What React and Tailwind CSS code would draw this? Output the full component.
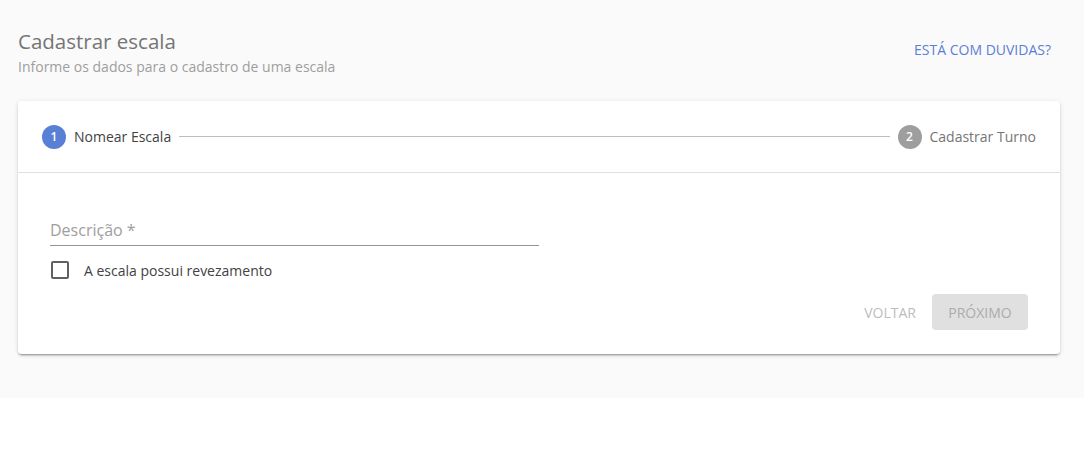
export default function App() {
  return (
    <div className="min-h-[460px] bg-white font-['Open_Sans',sans-serif]">
      <div className="bg-[#fafafa] pb-[44px] pl-[18px] pr-[24px] pt-[27px]">
        <div className="flex items-start justify-between">
          <div>
            <h1 className="text-[20.5px] leading-[28px] text-[#757575]">Cadastrar escala</h1>
            <p className="mt-[2px] text-[14px] leading-[20px] text-[#9e9e9e]">
              Informe os dados para o cadastro de uma escala
            </p>
          </div>
          <a className="mr-[9px] mt-[13px] text-[14px] leading-[20px] text-[#5b7fd6]">ESTÁ COM DUVIDAS?</a>
        </div>

        <div className="mt-[24px] rounded bg-white shadow-[0_2px_2px_rgba(0,0,0,0.14),0_1px_5px_rgba(0,0,0,0.12),0_3px_1px_-2px_rgba(0,0,0,0.2)]">
          <div className="flex h-[72px] items-center border-b border-[#e0e0e0] px-[24px]">
            <span className="flex h-[24px] w-[24px] items-center justify-center rounded-full bg-[#5880d4] text-[12px] font-semibold text-white">1</span>
            <span className="ml-[8px] text-[14px] text-[#424242]">Nomear Escala</span>
            <div className="mx-[8px] h-px flex-1 bg-[#bdbdbd]" />
            <span className="flex h-[24px] w-[24px] items-center justify-center rounded-full bg-[#9e9e9e] text-[12px] font-semibold text-white">2</span>
            <span className="ml-[8px] text-[14px] text-[#757575]">Cadastrar Turno</span>
          </div>

          <div className="px-[32px] pb-[24px]">
            <div className="w-[489px] border-b border-[#949494] pb-[3px] pt-[45px]">
              <span className="text-[16px] leading-[24px] text-[#9e9e9e]">Descrição *</span>
            </div>
            <label className="mt-[15px] flex h-[18px] items-center">
              <span className="ml-px box-border h-[18px] w-[18px] rounded-[2px] border-2 border-[#616161]" />
              <span className="ml-[15px] text-[14px] text-[#424242]">A escala possui revezamento</span>
            </label>
            <div className="mt-[15px] flex items-center justify-end gap-[16px]">
              <span className="text-[14px] text-[#bdbdbd]">VOLTAR</span>
              <span className="flex h-[36px] w-[96px] items-center justify-center rounded bg-[#e0e0e0] text-[14px] text-[#acacac]">
                PRÓXIMO
              </span>
            </div>
          </div>
        </div>
      </div>
    </div>
  );
}
